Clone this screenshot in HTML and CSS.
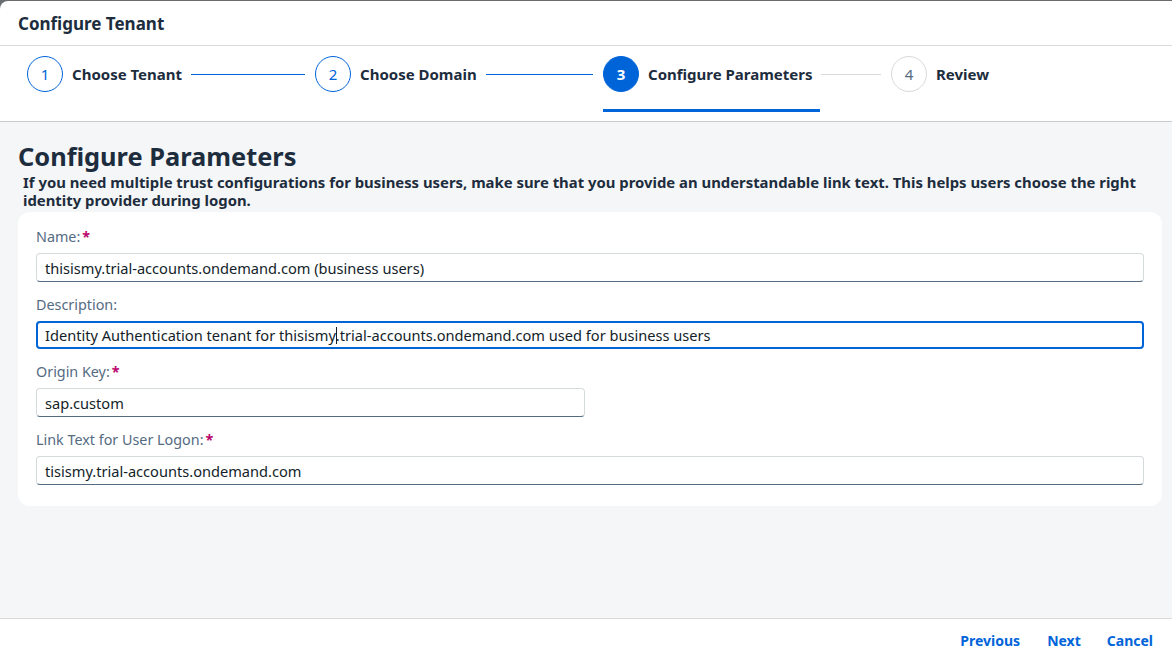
FILE: index.html
```html
<!DOCTYPE html>
<html>
<head>
<meta charset="utf-8">
<link rel="stylesheet" href="styles.css">
</head>
<body>
<div class="dialog">
  <header class="dlg-header">Configure Tenant</header>
  <nav class="wizard">
    <div class="step done">
      <span class="circle">1</span><span class="label">Choose Tenant</span><span class="line"></span>
    </div>
    <div class="step done">
      <span class="circle">2</span><span class="label">Choose Domain</span><span class="line"></span>
    </div>
    <div class="step active">
      <div class="active-wrap"><span class="circle">3</span><span class="label">Configure Parameters</span></div><span class="line"></span>
    </div>
    <div class="step todo">
      <span class="circle">4</span><span class="label">Review</span>
    </div>
  </nav>
  <main class="content">
    <h1 class="title">Configure Parameters</h1>
    <p class="intro">If you need multiple trust configurations for business users, make sure that you provide an understandable link text. This helps users choose the right identity provider during logon.</p>
    <section class="card">
      <div class="field">
        <label class="flabel">Name:<span class="req">*</span></label>
        <div class="input">thisismy.trial-accounts.ondemand.com (business users)</div>
      </div>
      <div class="field">
        <label class="flabel">Description:</label>
        <div class="input focused">Identity Authentication tenant for thisismy<span class="caret"></span>.trial-accounts.ondemand.com used for business users</div>
      </div>
      <div class="field">
        <label class="flabel">Origin Key:<span class="req">*</span></label>
        <div class="input half">sap.custom</div>
      </div>
      <div class="field">
        <label class="flabel">Link Text for User Logon:<span class="req">*</span></label>
        <div class="input">tisismy.trial-accounts.ondemand.com</div>
      </div>
    </section>
  </main>
  <footer class="dlg-footer">
    <a class="btn">Previous</a>
    <a class="btn next">Next</a>
    <a class="btn">Cancel</a>
  </footer>
</div>
</body>
</html>
```

FILE: styles.css
```css
* { box-sizing: border-box; }
html, body { margin: 0; padding: 0; height: 100%; }
body {
  background: #6a6d70;
  font-family: "Noto Sans", "Liberation Sans", sans-serif;
  color: #1d2d3e;
  overflow: hidden;
}
.dialog {
  margin-top: 1px;
  height: 656px;
  background: #ffffff;
  border-radius: 8px 0 0 0;
  display: flex;
  flex-direction: column;
  overflow: hidden;
}
.dlg-header {
  height: 45px;
  flex: none;
  padding: 1px 18px 0 18px;
  display: flex;
  align-items: center;
  font-size: 17px;
  font-weight: 700;
  border-bottom: 1px solid #d9d9d9;
}
.wizard {
  flex: none;
  height: 76px;
  border-bottom: 1px solid #c9cbcd;
  display: grid;
  grid-template-columns: repeat(4, 288px);
  padding: 10px 0 0 27px;
}
.step {
  display: flex;
  align-items: flex-start;
  height: 56px;
}
.active-wrap {
  display: flex;
  align-items: flex-start;
  height: 56px;
  padding-right: 7px;
  border-bottom: 3px solid #0064d9;
}
.circle {
  width: 36px;
  height: 36px;
  flex: none;
  border-radius: 50%;
  border: 1px solid #0064d9;
  color: #0064d9;
  display: flex;
  align-items: center;
  justify-content: center;
  font-size: 15px;
}
.label {
  margin-left: 9px;
  height: 36px;
  display: flex;
  align-items: center;
  font-size: 15px;
  font-weight: 700;
  color: #1d2d3e;
  white-space: nowrap;
}
.line {
  flex: 1;
  height: 1px;
  background: #0064d9;
  margin: 18px 10px 0 9px;
}
.active .circle {
  background: #0064d9;
  color: #ffffff;
  font-weight: 700;
}
.active .line {
  background: #d9d9d9;
  margin-left: 1px;
}
.todo .circle {
  border-color: #d9d9d9;
  color: #556b82;
}
.content {
  flex: 1;
  background: #f5f6f7;
  padding: 19px 10px 0 18px;
}
.title {
  margin: 0;
  font-size: 25.4px;
  font-weight: 700;
  line-height: 30px;
  color: #1d2d3e;
}
.intro {
  margin: 2px 0 0 5px;
  font-size: 14.87px;
  font-weight: 700;
  line-height: 18px;
  color: #1d2d3e;
}
.card {
  margin-top: 3px;
  width: 1144px;
  background: #ffffff;
  border-radius: 12px;
  padding: 16px 18px 21px 18px;
}
.field + .field { margin-top: 14px; }
.flabel {
  display: block;
  font-size: 14.35px;
  color: #556b82;
  line-height: 18px;
  margin-bottom: 7px;
}
.req {
  color: #ba066c;
  font-weight: 700;
  margin-left: 2px;
}
.input {
  height: 29px;
  border: 1px solid #d5dadd;
  border-bottom-color: #556b82;
  border-radius: 4px;
  padding: 0 8px;
  display: flex;
  align-items: center;
  font-size: 14.6px;
  color: #131e29;
  white-space: nowrap;
}
.input.half { width: 549px; }
.input.focused {
  height: 28px;
  border: 2px solid #0064d9;
  padding: 0 7px;
}
.caret {
  display: inline-block;
  width: 1px;
  height: 17px;
  background: #131e29;
  margin: 0 -1px 0 0;
}
.dlg-footer {
  flex: none;
  height: 39px;
  border-top: 1px solid #d9d9d9;
  display: flex;
  justify-content: flex-end;
  align-items: center;
  padding: 5px 19px 0 0;
  gap: 27px;
}
.btn {
  font-size: 14px;
  font-weight: 700;
  color: #0064d9;
  cursor: pointer;
}
.btn.next { margin-right: -1px; }
```
